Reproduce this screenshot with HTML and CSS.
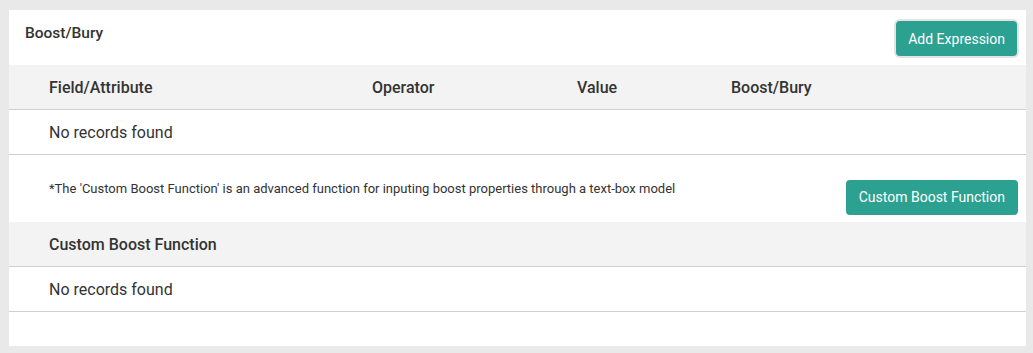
FILE: index.html
```html
<!DOCTYPE html>
<html lang="en">
<head>
    <meta charset="UTF-8">
    <meta name="viewport" content="width=device-width, initial-scale=1.0">
    <title>Boost/Bury</title>
    <link rel="stylesheet" href="styles.css">
</head>
<body>
    <main class="panel">
        <div class="panel-head">
            <h2>Boost/Bury</h2>
            <button class="btn btn-outlined">Add Expression</button>
        </div>

        <div class="table">
            <div class="row head-row cols">
                <div>Field/Attribute</div>
                <div>Operator</div>
                <div>Value</div>
                <div>Boost/Bury</div>
            </div>
            <div class="row empty-row">No records found</div>
        </div>

        <div class="note-bar">
            <p class="note">*The 'Custom Boost Function' is an advanced function for inputing boost properties through a text-box model</p>
            <button class="btn">Custom Boost Function</button>
        </div>

        <div class="table">
            <div class="row head-row">Custom Boost Function</div>
            <div class="row empty-row">No records found</div>
        </div>
    </main>
</body>
</html>
```

FILE: styles.css
```css
* {
    box-sizing: border-box;
}
body {
    font-family: Roboto, "Liberation Sans", sans-serif;
    margin: 0;
    padding: 10px 7px 7px 9px;
    background-color: #e9e9e9;
    color: #333;
}
.panel {
    background-color: white;
    height: 336px;
}
.panel-head {
    display: flex;
    justify-content: space-between;
    align-items: flex-start;
    height: 55px;
    padding: 11px 9px 0 16px;
}
h2 {
    margin: 0;
    padding-top: 3px;
    font-size: 15.5px;
    font-weight: 500;
    color: #333;
}
.btn {
    font-family: inherit;
    font-size: 14px;
    color: white;
    background-color: #2ca192;
    border: none;
    border-radius: 4px;
    height: 35px;
    padding: 0 13px;
    cursor: pointer;
}
.btn-outlined {
    box-shadow: 0 0 0 2px #e3e3e3;
    padding: 0 12px;
}
.row {
    display: flex;
    align-items: center;
    padding-left: 40px;
    border-bottom: 1px solid #cfcfcf;
}
.head-row {
    background-color: #f3f3f3;
    height: 45px;
    font-size: 16px;
    font-weight: 500;
}
.cols div:nth-child(1) { width: 323px; }
.cols div:nth-child(2) { width: 205px; }
.cols div:nth-child(3) { width: 154px; }
.empty-row {
    height: 45px;
    font-size: 16px;
}
.note-bar {
    display: flex;
    justify-content: space-between;
    align-items: center;
    height: 67px;
    padding: 0 8px 0 40px;
}
.note {
    margin: 0;
    font-size: 13px;
}
.note-bar .btn {
    margin-top: 17px;
}
```
